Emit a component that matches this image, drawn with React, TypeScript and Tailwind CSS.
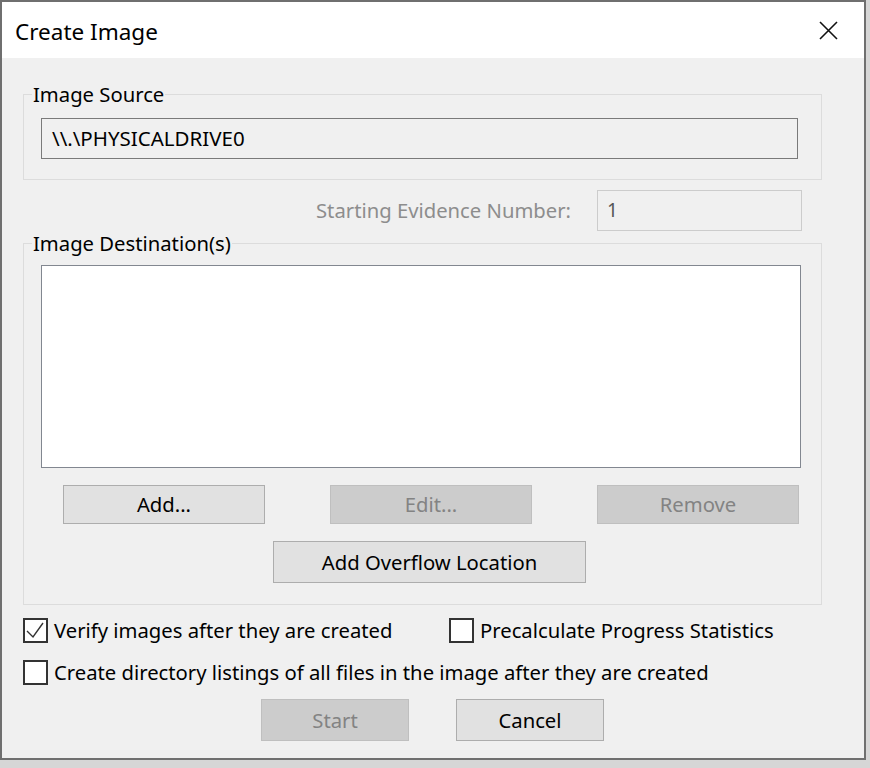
import React from 'react';

const font = { fontFamily: '"Noto Sans", "Open Sans", Arial, sans-serif' };

function Button({ label, disabled, className }: { label: string; disabled?: boolean; className: string }) {
  return (
    <div
      className={
        'flex items-center justify-center border text-[20.25px] ' +
        (disabled
          ? 'bg-[#cccccc] border-[#bfbfbf] text-[#838383] '
          : 'bg-[#e1e1e1] border-[#adadad] text-black ') +
        className
      }
    >
      {label}
    </div>
  );
}

function Checkbox({ checked, label }: { checked?: boolean; label: string }) {
  return (
    <div className="flex items-center gap-[6px]">
      <div className="w-[25px] h-[25px] border-2 border-[#333333] bg-white flex items-center justify-center">
        {checked && (
          <svg width="21" height="21" viewBox="0 0 21 21">
            <polyline points="2,11 8,17 18,3" fill="none" stroke="#333333" strokeWidth="1.4" />
          </svg>
        )}
      </div>
      <span className="text-[20.25px] text-black leading-[26px]">{label}</span>
    </div>
  );
}

export default function App() {
  return (
    <div className="w-[870px] h-[768px] bg-[#d6d6d6]" style={font}>
      <div className="w-[866px] h-[760px] border-2 border-[#6f6f6f] bg-[#f0f0f0] flex flex-col">
        {/* title bar */}
        <div className="h-[56px] bg-white flex items-center justify-between pl-[13px] pr-[26px]">
          <span className="text-[22.5px] text-black pt-[3px]">Create Image</span>
          <svg width="19" height="19" viewBox="0 0 19 19">
            <path d="M1 1 L18 18 M18 1 L1 18" stroke="#111111" strokeWidth="1.6" />
          </svg>
        </div>

        {/* Image Source */}
        <div className="relative mt-[36px] ml-[21px] w-[799px] h-[86px] border border-[#dcdcdc] pl-[17px] pt-[23px]">
          <span className="absolute left-[8px] top-[-13px] bg-[#f0f0f0] px-[1px] text-[20.25px] leading-[24px] text-black">
            Image Source
          </span>
          <div className="w-[757px] h-[41px] border border-[#7a7a7a] pl-[10px] flex items-center text-[20.5px] text-black">
            {'\\\\.\\PHYSICALDRIVE0'}
          </div>
        </div>

        {/* Starting evidence number */}
        <div className="mt-[10px] flex items-center justify-end pr-[62px] gap-[26px]">
          <span className="text-[20.25px] text-[#8d8d8d]">Starting Evidence Number:</span>
          <div className="w-[205px] h-[41px] border border-[#cccccc] pl-[9px] flex items-center text-[19px] text-[#555555]">
            1
          </div>
        </div>

        {/* Image Destination(s) */}
        <div className="relative mt-[12px] ml-[21px] w-[799px] h-[362px] border border-[#dcdcdc] pt-[21px]">
          <span className="absolute left-[8px] top-[-13px] bg-[#f0f0f0] px-[1px] text-[20.25px] leading-[24px] text-black">
            Image Destination(s)
          </span>
          <div className="ml-[17px] w-[760px] h-[203px] border border-[#828790] bg-white" />
          <div className="mt-[17px] pl-[39px] flex gap-[65px]">
            <Button label="Add..." className="w-[202px] h-[39px]" />
            <Button label="Edit..." disabled className="w-[202px] h-[39px]" />
            <Button label="Remove" disabled className="w-[202px] h-[39px]" />
          </div>
          <div className="mt-[17px] pl-[249px]">
            <Button label="Add Overflow Location" className="w-[313px] h-[42px]" />
          </div>
        </div>

        {/* options */}
        <div className="mt-[12px] ml-[21px] flex">
          <div className="w-[426px]">
            <Checkbox checked label="Verify images after they are created" />
          </div>
          <Checkbox label="Precalculate Progress Statistics" />
        </div>
        <div className="mt-[16px] ml-[21px]">
          <Checkbox label="Create directory listings of all files in the image after they are created" />
        </div>

        {/* actions */}
        <div className="mt-[14px] pl-[259px] flex gap-[47px]">
          <Button label="Start" disabled className="w-[148px] h-[42px]" />
          <Button label="Cancel" className="w-[148px] h-[42px]" />
        </div>
      </div>
    </div>
  );
}
